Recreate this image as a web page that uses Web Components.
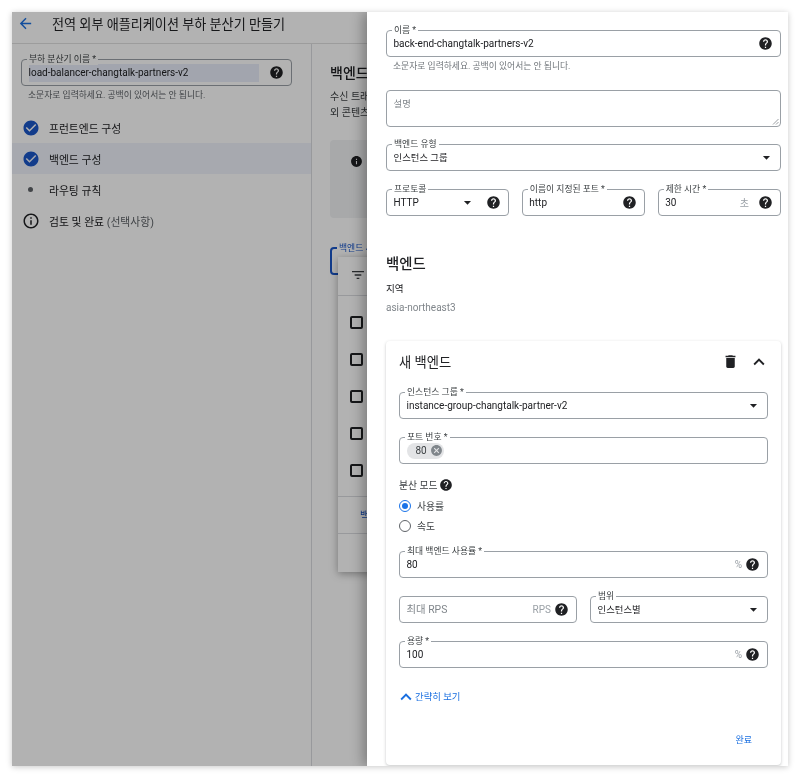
<!DOCTYPE html>
<html lang="ko">
<head>
<meta charset="utf-8">
<title>전역 외부 애플리케이션 부하 분산기 만들기</title>
<style>
    html, body { margin: 0; height: 100%; background: #fff; overflow: hidden; }
    body { font-family: Roboto, "Noto Sans CJK KR", sans-serif; color: #202124; }
</style>
</head>
<body>

<lb-window>
    <lb-page slot="page"></lb-page>
    <lb-panel slot="panel"></lb-panel>
</lb-window>

<script>
const ICONS = {
    help: 'M12 2C6.48 2 2 6.48 2 12s4.48 10 10 10 10-4.48 10-10S17.52 2 12 2zm1 17h-2v-2h2v2zm2.07-7.75l-.9.92C13.45 12.9 13 13.5 13 15h-2v-.5c0-1.1.45-2.1 1.17-2.83l1.24-1.26c.37-.36.59-.86.59-1.41 0-1.1-.9-2-2-2s-2 .9-2 2H8c0-2.21 1.79-4 4-4s4 1.79 4 4c0 .88-.36 1.68-.93 2.25z',
    info: 'M12 2C6.48 2 2 6.48 2 12s4.48 10 10 10 10-4.48 10-10S17.52 2 12 2zm1 15h-2v-6h2v6zm0-8h-2V7h2v2z',
    infoOutline: 'M11 7h2v2h-2zm0 4h2v6h-2zm1-9C6.48 2 2 6.48 2 12s4.48 10 10 10 10-4.48 10-10S17.52 2 12 2zm0 18c-4.41 0-8-3.59-8-8s3.59-8 8-8 8 3.59 8 8-3.59 8-8 8z',
    check: 'M12 2C6.48 2 2 6.48 2 12s4.48 10 10 10 10-4.48 10-10S17.52 2 12 2zm-2 15l-5-5 1.41-1.41L10 14.17l7.59-7.59L19 8l-9 9z',
    back: 'M20 11H7.83l5.59-5.59L12 4l-8 8 8 8 1.41-1.41L7.83 13H20v-2z',
    drop: 'M7 10l5 5 5-5z',
    up: 'M7.41 15.41L12 10.83l4.59 4.58L18 14l-6-6-6 6z',
    trash: 'M6 19c0 1.1.9 2 2 2h8c1.1 0 2-.9 2-2V7H6v12zM19 4h-3.5l-1-1h-5l-1 1H5v2h14V4z',
    filter: 'M3 6h18v2H3zm4 5h10v2H7zm3 5h4v2h-4z',
    cancel: 'M12 2C6.47 2 2 6.47 2 12s4.47 10 10 10 10-4.47 10-10S17.53 2 12 2zm5 13.59L15.59 17 12 13.41 8.41 17 7 15.59 10.59 12 7 8.41 8.41 7 12 10.59 15.59 7 17 8.41 13.41 12 17 15.59z'
};

class LbIcon extends HTMLElement {
    connectedCallback() {
        const size = this.getAttribute('size') || 14;
        const color = this.getAttribute('color') || '#202124';
        const name = this.getAttribute('name');
        this.attachShadow({ mode: 'open' }).innerHTML = `
            <style>
                :host { display: inline-flex; flex: none; width: ${size}px; height: ${size}px; }
                svg { display: block; width: 100%; height: 100%; fill: ${color}; }
            </style>
            <svg viewBox="0 0 24 24"><path d="${ICONS[name]}"/></svg>
        `;
    }
}
customElements.define('lb-icon', LbIcon);

// outlined material style field, label sits in the notch of the border
class LbField extends HTMLElement {
    connectedCallback() {
        const label = this.getAttribute('label');
        const value = this.getAttribute('value') || '';
        const placeholder = this.getAttribute('placeholder') || '';
        const suffix = this.getAttribute('suffix');
        const height = this.getAttribute('height') || 27;
        const hasHelp = this.hasAttribute('help');
        const hasArrow = this.hasAttribute('arrow');
        const multi = this.hasAttribute('multiline');
        const valueSize = /[가-힣]/.test(value) ? 9.4 : 10;
        const placeholderSize = /[A-Z]/.test(placeholder) ? 10.4 : 9.4;
        const suffixGap = suffix && /[가-힣]/.test(suffix) ? 6 : 0;
        this.attachShadow({ mode: 'open' }).innerHTML = `
            <style>
                :host { display: block; position: relative; flex: 1 1 0; min-width: 0; }
                .box {
                    box-sizing: border-box;
                    height: ${height}px;
                    border: 1px solid #9aa0a6;
                    border-radius: 4px;
                    padding: 0 7px 0 6.5px;
                    display: flex;
                    align-items: ${multi ? 'flex-start' : 'center'};
                    gap: 3px;
                    font-size: ${valueSize}px;
                    color: #202124;
                    position: relative;
                }
                .label {
                    position: absolute;
                    left: 5px;
                    top: -7px;
                    padding: 0 2px;
                    background: var(--notch-bg, #fff);
                    font-size: 8.8px;
                    line-height: 12px;
                    color: #3c4043;
                    white-space: nowrap;
                }
                .value { flex: 1; min-width: 0; white-space: nowrap; overflow: hidden; line-height: 16px; }
                .placeholder { color: #80868b; font-size: ${placeholderSize}px; }
                .multi { padding-top: 5px; }
                .suffix { color: #9aa0a6; font-size: 10px; margin-right: ${suffixGap}px; }
                .grip { position: absolute; right: 1px; bottom: 1px; width: 7px; height: 7px; }
            </style>
            <div class="box">
                ${label ? `<span class="label">${label}</span>` : ''}
                <span class="value ${multi ? 'multi' : ''} ${value || !placeholder ? '' : 'placeholder'}"><slot>${value || placeholder}</slot></span>
                ${suffix ? `<span class="suffix">${suffix}</span>` : ''}
                ${hasArrow ? '<lb-icon name="drop" size="17" style="margin-right:' + (hasHelp ? '7.5px' : '-2px') + '"></lb-icon>' : ''}
                ${hasHelp ? '<lb-icon name="help" size="15"></lb-icon>' : ''}
                ${multi ? '<svg class="grip" viewBox="0 0 7 7"><path d="M1 6.5L6.5 1M4 6.5L6.5 4" stroke="#80868b" stroke-width=".8" fill="none"/></svg>' : ''}
            </div>
        `;
    }
}
customElements.define('lb-field', LbField);

class LbChip extends HTMLElement {
    constructor() {
        super();
        this.attachShadow({ mode: 'open' }).innerHTML = `
            <style>
                :host {
                    display: inline-flex;
                    align-items: center;
                    gap: 3px;
                    height: 16px;
                    padding: 0 1px 0 9px;
                    border-radius: 8px;
                    background: #e3e4e6;
                    font-size: 10px;
                    color: #3c4043;
                }
            </style>
            <slot></slot><lb-icon name="cancel" size="13" color="#80868b"></lb-icon>
        `;
    }
}
customElements.define('lb-chip', LbChip);

class LbRadio extends HTMLElement {
    connectedCallback() {
        const on = this.hasAttribute('checked');
        this.attachShadow({ mode: 'open' }).innerHTML = `
            <style>
                :host { display: flex; align-items: center; gap: 6px; height: 20px; font-size: 9.8px; color: #3c4043; }
                .ring {
                    box-sizing: border-box;
                    width: 12px; height: 12px;
                    border-radius: 50%;
                    border: 1.5px solid ${on ? '#1a73e8' : '#5f6368'};
                    display: flex; align-items: center; justify-content: center;
                }
                .dot { width: 6px; height: 6px; border-radius: 50%; background: #1a73e8; }
            </style>
            <span class="ring">${on ? '<span class="dot"></span>' : ''}</span><slot></slot>
        `;
    }
}
customElements.define('lb-radio', LbRadio);

class LbStep extends HTMLElement {
    connectedCallback() {
        const kind = this.getAttribute('kind');
        let icon = '<lb-icon name="check" size="18" color="#1a56c8"></lb-icon>';
        if (kind === 'dot') icon = '<span class="dot"></span>';
        if (kind === 'info') icon = '<lb-icon name="infoOutline" size="18"></lb-icon>';
        this.attachShadow({ mode: 'open' }).innerHTML = `
            <style>
                :host {
                    display: flex;
                    align-items: center;
                    height: 31px;
                    font-size: 10.8px;
                    color: #202124;
                    background: ${this.hasAttribute('selected') ? '#eff3fb' : 'transparent'};
                }
                .icon { width: 37px; padding-left: 9px; box-sizing: border-box; display: flex; justify-content: center; padding-right: 9px; }
                .dot { width: 5px; height: 5px; margin: 0 1px; border-radius: 50%; background: #5f6368; }
            </style>
            <span class="icon">${icon}</span><span><slot></slot></span>
        `;
    }
}
customElements.define('lb-step', LbStep);

// the greyed wizard behind the side panel
class LbPage extends HTMLElement {
    constructor() {
        super();
        this.attachShadow({ mode: 'open' }).innerHTML = `
            <style>
                :host { display: flex; flex-direction: column; height: 100%; background: #fff; --notch-bg: #fff; }
                header {
                    flex: none;
                    box-sizing: border-box;
                    height: 32px;
                    display: flex;
                    align-items: center;
                    padding: 0 0 8px 5px;
                    gap: 18px;
                    font-size: 13.1px;
                    border-bottom: 1px solid #e0e0e0;
                }
                .body { flex: 1; display: flex; min-height: 0; }
                aside { flex: none; box-sizing: border-box; width: 300px; border-right: 1px solid #dadce0; padding-top: 15px; }
                .name { margin: 0 19px 0 9px; }
                .hint { margin: 3px 0 11px 16px; font-size: 8.8px; line-height: 12px; color: #5f6368; white-space: nowrap; }
                .sel { background: #e8edf9; padding: 1px 0; display: block; width: 230px; }
                .muted { color: #5f6368; }
                main { flex: 1; min-width: 0; padding: 20px 0 0 18px; position: relative; overflow: hidden; }
                h2 { margin: 0 0 7px; font-size: 14px; font-weight: 500; line-height: 18px; }
                p { margin: 0; font-size: 10px; line-height: 16px; color: #3c4043; white-space: nowrap; }
                .note {
                    margin-top: 19px;
                    height: 78px;
                    background: #f1f3f4;
                    border-radius: 4px;
                    padding: 13px 0 0 20px;
                    box-sizing: border-box;
                }
                .service {
                    margin-top: 29px;
                    box-sizing: border-box;
                    height: 28px;
                    width: 300px;
                    border: 2px solid #1a56c8;
                    border-radius: 4px;
                    position: relative;
                }
                .service span {
                    position: absolute; top: -7px; left: 5px;
                    padding: 0 2px;
                    font-size: 8.8px; line-height: 12px;
                    color: #1a56c8; background: #fff;
                    white-space: nowrap;
                }
                .menu {
                    position: absolute;
                    left: 26px; top: 213px;
                    width: 340px; height: 315px;
                    background: #fff;
                    box-shadow: 0 2px 8px rgba(0,0,0,.35);
                    display: flex;
                    flex-direction: column;
                }
                .filter { padding: 0 0 2px 12px; display: flex; align-items: center; border-bottom: 1px solid #dadce0; box-sizing: border-box; height: 39px; }
                .list { height: 201px; padding: 8px 0 0 12px; box-sizing: border-box; border-bottom: 1px solid #dadce0; display: flex; flex-direction: column; }
                .row { height: 37px; display: flex; align-items: center; flex: none; }
                .box { box-sizing: border-box; width: 13px; height: 13px; border: 2px solid #202124; border-radius: 2px; }
                .add { box-sizing: border-box; height: 37px; padding: 0 0 2px 22px; display: flex; align-items: center; font-size: 10px; color: #1a56c8; border-bottom: 1px solid #dadce0; }
            </style>
            <header>
                <lb-icon name="back" size="17" color="#1a6fe0"></lb-icon>
                <span>전역 외부 애플리케이션 부하 분산기 만들기</span>
            </header>
            <div class="body">
                <aside>
                    <div class="name">
                        <lb-field label="부하 분산기 이름 *" help><span class="sel">load-balancer-changtalk-partners-v2</span></lb-field>
                    </div>
                    <div class="hint">소문자로 입력하세요. 공백이 있어서는 안 됩니다.</div>
                    <lb-step>프런트엔드 구성</lb-step>
                    <lb-step selected>백엔드 구성</lb-step>
                    <lb-step kind="dot">라우팅 규칙</lb-step>
                    <lb-step kind="info">검토 및 완료 <span class="muted">(선택사항)</span></lb-step>
                </aside>
                <main>
                    <h2>백엔드</h2>
                    <p>수신 트래</p>
                    <p>외 콘텐츠</p>
                    <div class="note"><lb-icon name="info" size="13"></lb-icon></div>
                    <div class="service"><span>백엔드 서</span></div>
                    <div class="menu">
                        <div class="filter"><lb-icon name="filter" size="16" color="#3c4043"></lb-icon></div>
                        <div class="list">
                            <div class="row"><span class="box"></span></div>
                            <div class="row"><span class="box"></span></div>
                            <div class="row"><span class="box"></span></div>
                            <div class="row"><span class="box"></span></div>
                            <div class="row"><span class="box"></span></div>
                        </div>
                        <div class="add">백</div>
                    </div>
                </main>
            </div>
        `;
    }
}
customElements.define('lb-page', LbPage);

// collapsible card for a single backend
class LbBackendCard extends HTMLElement {
    constructor() {
        super();
        this.attachShadow({ mode: 'open' }).innerHTML = `
            <style>
                :host {
                    display: block;
                    box-sizing: border-box;
                    background: #fff;
                    border-radius: 4px;
                    box-shadow: 0 1px 3px rgba(60,64,67,.3);
                    padding: 0 13px;
                    height: 424px;
                }
                .top { height: 41px; box-sizing: border-box; display: flex; align-items: center; gap: 9px; font-size: 13.3px; font-weight: 400; }
                .top span { flex: 1; }
                .fields { display: flex; flex-direction: column; }
                .row { display: flex; gap: 13px; }
                .mode { display: flex; align-items: center; gap: 2px; font-size: 9.8px; color: #3c4043; height: 16px; margin-top: 13px; }
                .more { display: flex; align-items: center; margin: 21px 0 0 -4px; font-size: 9.4px; line-height: 16px; height: 16px; color: #1a6fe0; }
                .more lb-icon { margin-right: -2px; }
                .done { margin: 27px 16px 0 0; text-align: right; font-size: 9px; line-height: 16px; color: #1a6fe0; }
            </style>
            <div class="top">
                <span>새 백엔드</span>
                <lb-icon name="trash" size="17"></lb-icon>
                <lb-icon name="up" size="22" style="margin-right:-2px"></lb-icon>
            </div>
            <div class="fields">
                <lb-field style="margin-top:10px" label="인스턴스 그룹 *" value="instance-group-changtalk-partner-v2" arrow></lb-field>
                <lb-field style="margin-top:18px" label="포트 번호 *"><lb-chip>80</lb-chip></lb-field>
                <div class="mode">분산 모드 <lb-icon name="help" size="14"></lb-icon></div>
                <lb-radio style="margin-top:3px" checked>사용률</lb-radio>
                <lb-radio>속도</lb-radio>
                <lb-field style="margin-top:15px" label="최대 백엔드 사용률 *" value="80" suffix="%" help></lb-field>
                <div class="row" style="margin-top:18px">
                    <lb-field placeholder="최대 RPS" suffix="RPS" help></lb-field>
                    <lb-field label="범위" value="인스턴스별" arrow></lb-field>
                </div>
                <lb-field style="margin-top:18px" label="용량 *" value="100" suffix="%" help></lb-field>
                <div class="more"><lb-icon name="up" size="22" color="#1a6fe0"></lb-icon>간략히 보기</div>
                <div class="done">완료</div>
            </div>
        `;
    }
}
customElements.define('lb-backend-card', LbBackendCard);

class LbPanel extends HTMLElement {
    constructor() {
        super();
        this.attachShadow({ mode: 'open' }).innerHTML = `
            <style>
                :host {
                    display: block;
                    box-sizing: border-box;
                    height: 100%;
                    background: #fff;
                    padding: 18px 7px 0 19px;
                    box-shadow: -4px 0 12px rgba(0,0,0,.3);
                    overflow: hidden;
                }
                .hint { margin: 3px 0 0 7px; font-size: 8.8px; line-height: 12px; color: #70757a; }
                .row { display: flex; gap: 12.5px; }
                h2 { margin: 39px 0 0; font-size: 14.4px; font-weight: 500; line-height: 20px; }
                .k { margin-top: 7px; font-size: 9.6px; line-height: 14px; color: #202124; }
                .v { margin-top: 5px; font-size: 10px; line-height: 14px; color: #80868b; }
                lb-backend-card { margin-top: 26px; }
            </style>
            <lb-field label="이름 *" value="back-end-changtalk-partners-v2" help></lb-field>
            <div class="hint">소문자로 입력하세요. 공백이 있어서는 안 됩니다.</div>
            <lb-field style="margin-top:18px" placeholder="설명" height="37" multiline></lb-field>
            <lb-field style="margin-top:17px" label="백엔드 유형" value="인스턴스 그룹" arrow></lb-field>
            <div class="row" style="margin-top:18px">
                <lb-field label="프로토콜" value="HTTP" arrow help></lb-field>
                <lb-field label="이름이 지정된 포트 *" value="http" help></lb-field>
                <lb-field label="제한 시간 *" value="30" suffix="초" help></lb-field>
            </div>
            <h2>백엔드</h2>
            <div class="k">지역</div>
            <div class="v">asia-northeast3</div>
            <lb-backend-card></lb-backend-card>
        `;
    }
}
customElements.define('lb-panel', LbPanel);

class LbWindow extends HTMLElement {
    constructor() {
        super();
        this.attachShadow({ mode: 'open' }).innerHTML = `
            <style>
                :host {
                    display: block;
                    position: relative;
                    margin: 12px;
                    height: 754px;
                    box-shadow: 0 1px 6px rgba(0,0,0,.22);
                    overflow: hidden;
                    filter: blur(.35px);
                }
                .scrim { position: absolute; inset: 0; background: rgba(0,0,0,.3); }
                .side { position: absolute; top: 0; bottom: 0; left: 355px; right: 0; }
            </style>
            <slot name="page"></slot>
            <div class="scrim"></div>
            <div class="side"><slot name="panel"></slot></div>
        `;
    }
}
customElements.define('lb-window', LbWindow);
</script>
</body>
</html>
